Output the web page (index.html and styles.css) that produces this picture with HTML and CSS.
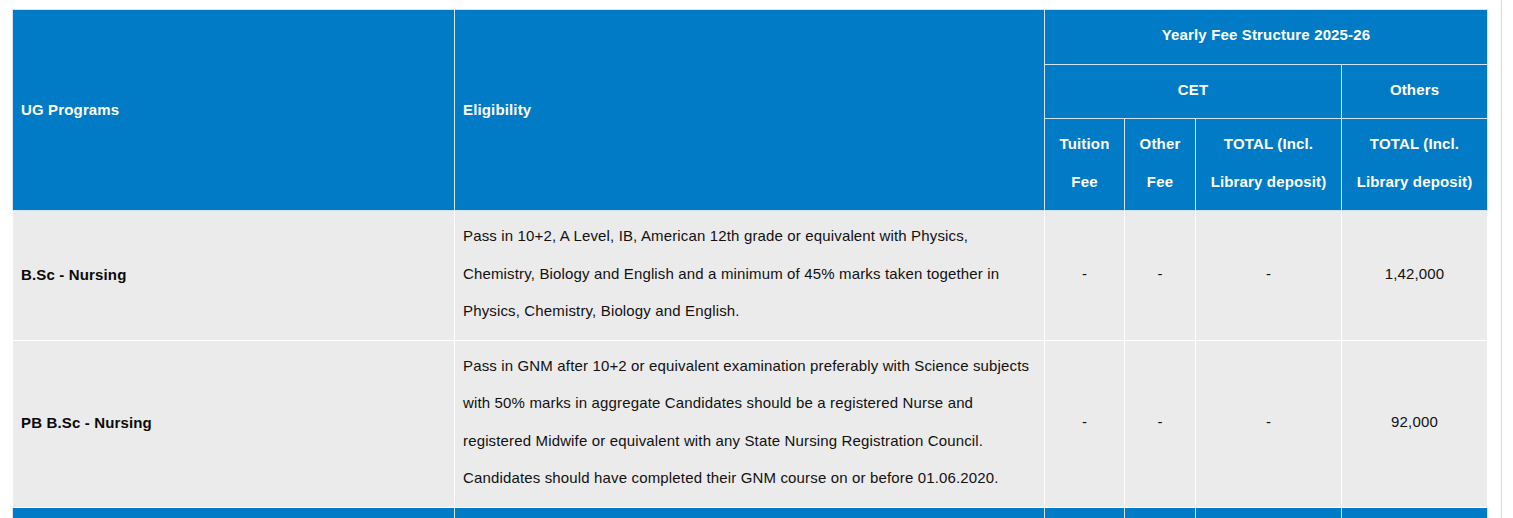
FILE: index.html
```html
<!DOCTYPE html>
<html lang="en">
<head>
<meta charset="utf-8">
<title>Fee Structure</title>
<link rel="stylesheet" href="styles.css">
</head>
<body>
<div class="page">
  <table class="fees">
    <colgroup>
      <col class="c-prog">
      <col class="c-elig">
      <col class="c-tuition">
      <col class="c-other">
      <col class="c-total">
      <col class="c-others">
    </colgroup>
    <thead>
      <tr>
        <th rowspan="3" class="left">UG Programs</th>
        <th rowspan="3" class="left">Eligibility</th>
        <th colspan="4">Yearly Fee Structure 2025-26</th>
      </tr>
      <tr>
        <th colspan="3">CET</th>
        <th>Others</th>
      </tr>
      <tr>
        <th>Tuition Fee</th>
        <th>Other Fee</th>
        <th>TOTAL (Incl. Library deposit)</th>
        <th>TOTAL (Incl. Library deposit)</th>
      </tr>
    </thead>
    <tbody>
      <tr>
        <td class="prog">B.Sc - Nursing</td>
        <td>Pass in 10+2, A Level, IB, American 12th grade or equivalent with Physics, Chemistry, Biology and English and a minimum of 45% marks taken together in Physics, Chemistry, Biology and English.</td>
        <td class="num">-</td>
        <td class="num">-</td>
        <td class="num">-</td>
        <td class="num">1,42,000</td>
      </tr>
      <tr>
        <td class="prog">PB B.Sc - Nursing</td>
        <td>Pass in GNM after 10+2 or equivalent examination preferably with Science subjects with 50% marks in aggregate Candidates should be a registered Nurse and registered Midwife or equivalent with any State Nursing Registration Council. Candidates should have completed their GNM course on or before 01.06.2020.</td>
        <td class="num">-</td>
        <td class="num">-</td>
        <td class="num">-</td>
        <td class="num">92,000</td>
      </tr>
    </tbody>
    <tfoot>
      <tr>
        <th class="left">&nbsp;</th>
        <th class="left">&nbsp;</th>
        <th>&nbsp;</th>
        <th>&nbsp;</th>
        <th>&nbsp;</th>
        <th>&nbsp;</th>
      </tr>
    </tfoot>
  </table>
</div>
</body>
</html>
```

FILE: styles.css
```css
html, body {
  margin: 0;
  padding: 0;
  background: #ffffff;
}

body {
  font-family: "Liberation Sans", Arial, sans-serif;
  font-size: 15px;
  letter-spacing: 0.15px;
  color: #111111;
}

.page {
  width: 1502px;
  min-height: 518px;
  padding: 9px 14px 0 12px;
  box-sizing: border-box;
  border-right: 1px solid #dcdcdc;
}

.fees {
  width: 1475px;
  table-layout: fixed;
  border-collapse: collapse;
  border: 1px solid #d6e6f2;
}

.c-prog { width: 442px; }
.c-elig { width: 590px; }
.c-tuition { width: 80px; }
.c-other { width: 71px; }
.c-total { width: 146px; }
.c-others { width: 146px; }

.fees th,
.fees td {
  padding: 6px 8px 10px;
  line-height: 37.5px;
  vertical-align: middle;
  border: 1px solid #f2f6fa;
}

.fees th {
  background: #027bc6;
  color: #ffffff;
  font-weight: bold;
  text-align: center;
  border-color: #d3e5f2;
}

.fees th.left {
  text-align: left;
  padding: 8px;
}

.fees td {
  background: #ebebeb;
  text-align: left;
  border-color: #ffffff;
}

.fees td.prog {
  font-weight: bold;
  color: #0a0a0a;
  padding: 7px 8px 9px;
}

.fees td.num {
  text-align: center;
}
```
